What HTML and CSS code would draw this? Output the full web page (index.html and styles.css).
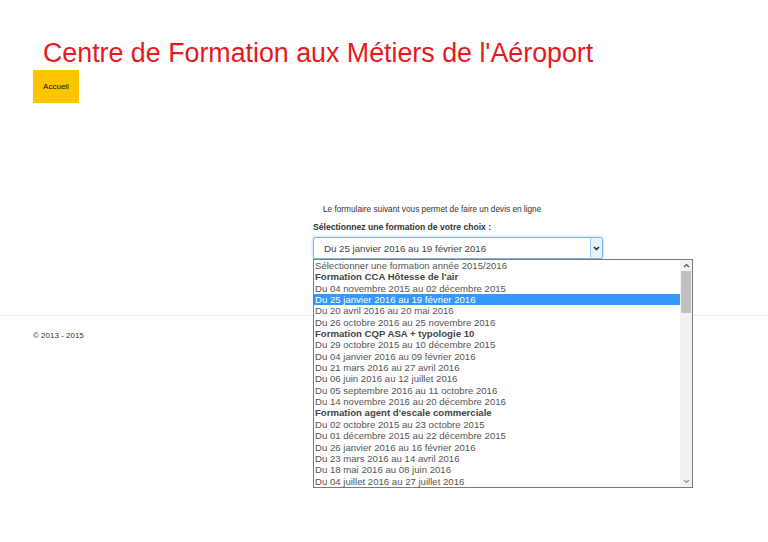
FILE: index.html
```html
<!DOCTYPE html>
<html>
<head>
    <meta charset="utf-8">
    <link rel="stylesheet" href="styles.css">
</head>
<body>
    <header class="header">
        <h1 class="site-title">Centre de Formation aux Métiers de l'Aéroport</h1>
        <nav class="nav">
            <a class="nav-item" href="#">Accueil</a>
        </nav>
    </header>

    <main class="main">
        <div class="devis">
            <p class="intro">Le formulaire suivant vous permet de faire un devis en ligne</p>
            <label class="field-label" for="formation">Sélectionnez une formation de votre choix :</label>
            <div class="select-wrap">
                <div class="select" id="formation">
                    <span class="select-value">Du 25 janvier 2016 au 19 février 2016</span>
                    <span class="select-arrow">
                        <svg width="7" height="5" viewBox="0 0 7 5"><path d="M1 1 L3.5 3.5 L6 1" fill="none" stroke="#222" stroke-width="1.5"/></svg>
                    </span>
                </div>

                <!-- open dropdown -->
                <div class="dropdown">
                    <ul class="options">
                        <li>Sélectionner une formation année 2015/2016</li>
                        <li class="group">Formation CCA Hôtesse de l'air</li>
                        <li>Du 04 novembre 2015 au 02 décembre 2015</li>
                        <li class="selected">Du 25 janvier 2016 au 19 février 2016</li>
                        <li>Du 20 avril 2016 au 20 mai 2016</li>
                        <li>Du 26 octobre 2016 au 25 novembre 2016</li>
                        <li class="group">Formation CQP ASA + typologie 10</li>
                        <li>Du 29 octobre 2015 au 10 décembre 2015</li>
                        <li>Du 04 janvier 2016 au 09 février 2016</li>
                        <li>Du 21 mars 2016 au 27 avril 2016</li>
                        <li>Du 06 juin 2016 au 12 juillet 2016</li>
                        <li>Du 05 septembre 2016 au 11 octobre 2016</li>
                        <li>Du 14 novembre 2016 au 20 décembre 2016</li>
                        <li class="group">Formation agent d'escale commerciale</li>
                        <li>Du 02 octobre 2015 au 23 octobre 2015</li>
                        <li>Du 01 décembre 2015 au 22 décembre 2015</li>
                        <li>Du 26 janvier 2016 au 16 février 2016</li>
                        <li>Du 23 mars 2016 au 14 avril 2016</li>
                        <li>Du 18 mai 2016 au 08 juin 2016</li>
                        <li>Du 04 juillet 2016 au 27 juillet 2016</li>
                    </ul>
                    <div class="scrollbar">
                        <span class="scroll-btn">
                            <svg width="7" height="5" viewBox="0 0 7 5"><path d="M1 4 L3.5 1.5 L6 4" fill="none" stroke="#555" stroke-width="1.2"/></svg>
                        </span>
                        <div class="scroll-track">
                            <div class="scroll-thumb"></div>
                        </div>
                        <span class="scroll-btn">
                            <svg width="7" height="5" viewBox="0 0 7 5"><path d="M1 1 L3.5 3.5 L6 1" fill="none" stroke="#999" stroke-width="1.2"/></svg>
                        </span>
                    </div>
                </div>
            </div>
        </div>
    </main>

    <footer class="footer">
        <p>&copy; 2013 - 2015</p>
    </footer>
</body>
</html>
```

FILE: styles.css
```css
html {
    min-height: 100%;
}
body {
    margin: 0;
    min-height: 542px;
    font-family: 'Liberation Sans', Arial, sans-serif;
    color: #333;
    background-color: #fff;
}
.header {
    padding: 0 33px;
}
.site-title {
    margin: 0;
    padding: 37px 0 0 10px;
    font-size: 26.8px;
    font-weight: 400;
    line-height: 33px;
    color: #e8191c;
}
.nav {
    display: flex;
}
.nav-item {
    display: block;
    width: 46px;
    height: 33px;
    line-height: 33px;
    text-align: center;
    font-size: 8px;
    color: #111;
    text-decoration: none;
    background-color: #ffc400;
}

.main {
    padding: 101px 0 0 313px;
    height: 111px;
}
.devis {
    width: 290px;
}
.intro {
    margin: 0 0 7px 10px;
    font-size: 8.25px;
    line-height: 11px;
    color: #333;
}
.field-label {
    display: block;
    margin-bottom: 4px;
    font-size: 8.6px;
    font-weight: 700;
    line-height: 11px;
    color: #333;
}
.select-wrap {
    position: relative;
}
.select {
    display: flex;
    align-items: center;
    height: 20px;
    border: 1px solid #7eb4ea;
    border-radius: 2px;
    box-shadow: 0 0 3px rgba(102, 175, 233, 0.6);
    background-color: #fff;
}
.select-value {
    flex: 1;
    padding-left: 10px;
    font-size: 9.7px;
    color: #444;
}
.select-arrow {
    display: flex;
    align-items: center;
    justify-content: center;
    width: 11px;
    height: 20px;
    background-color: #e5f1fb;
    border-left: 1px solid #a8cdef;
}

/* Open list, drawn over the page */
.dropdown {
    position: absolute;
    left: 0;
    top: 22px;
    display: flex;
    width: 378px;
    height: 227px;
    border: 1px solid #7a7a7a;
    background-color: #fff;
    z-index: 10;
}
.options {
    flex: 1;
    margin: 0;
    padding: 0;
    list-style: none;
    font-size: 9.6px;
    line-height: 11.35px;
    color: #555;
}
.options li {
    padding-left: 1px;
    white-space: nowrap;
}
.options li.group {
    font-weight: 700;
    color: #444;
}
.options li.selected {
    background-color: #3399ff;
    color: #fff;
}
.scrollbar {
    display: flex;
    flex-direction: column;
    width: 12px;
    background-color: #f1f1f1;
}
.scroll-btn {
    display: flex;
    align-items: center;
    justify-content: center;
    height: 11px;
}
.scroll-track {
    flex: 1;
    padding: 0 1px;
}
.scroll-thumb {
    height: 42px;
    background-color: #c1c1c1;
}

.footer {
    padding: 10px 33px;
    border-top: 1px solid #eee;
}
.footer p {
    margin: 0;
    font-size: 8px;
    line-height: 20px;
    color: #333;
}
```
